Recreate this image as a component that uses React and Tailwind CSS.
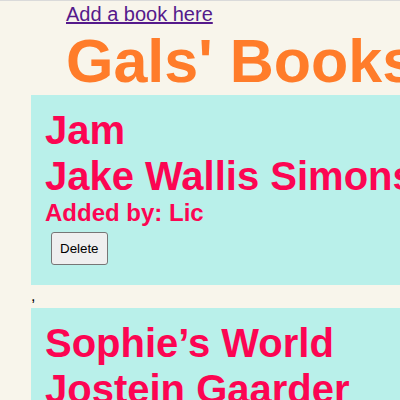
const BOOKS = [
  { title: 'Jam', author: 'Jake Wallis Simons', addedBy: 'Lic' },
  { title: 'Sophie\u2019s World', author: 'Jostein Gaarder', addedBy: 'Lic' },
];

function BookCard({ book }) {
  return (
    <div className="bg-[#b9f0ea] pt-[12px] pb-[20px] pl-[14px] w-[369px] overflow-hidden font-bold text-[#fc0552]">
      <div className="text-[40px] leading-[46px] whitespace-nowrap">{book.title}</div>
      <div className="text-[40px] leading-[46px] whitespace-nowrap">{book.author}</div>
      <div className="text-[24px] leading-[28px] whitespace-nowrap">Added by: {book.addedBy}</div>
      <button className="mt-[5px] ml-[6px] px-[8px] h-[33px] text-[13.33px] font-normal text-black bg-[#efefef] border border-[#767676] rounded-[3px]">
        Delete
      </button>
    </div>
  );
}

export default function App() {
  return (
    <div
      className="min-h-screen w-[400px] overflow-hidden bg-[#f8f5eb] border-t border-[#dadada] pl-[31px]"
      style={{ fontFamily: '"Liberation Sans", Arial, sans-serif' }}
    >
      <div className="ml-[35px] pt-[2px] text-[20px] leading-[23px]">
        <a href="#" className="text-[#551a8b] underline">Add a book here</a>
      </div>
      <h1 className="ml-[35px] mt-[5px] text-[61px] leading-[61px] font-bold text-[#ff7c2a] whitespace-nowrap">
        Gals' Books
      </h1>
      <div className="mt-[3px]">
        {BOOKS.map((book, i) => (
          <div key={i}>
            {i > 0 && <div className="text-[16px] leading-[21px] mb-[2px] text-black">,</div>}
            <BookCard book={book} />
          </div>
        ))}
      </div>
    </div>
  );
}
